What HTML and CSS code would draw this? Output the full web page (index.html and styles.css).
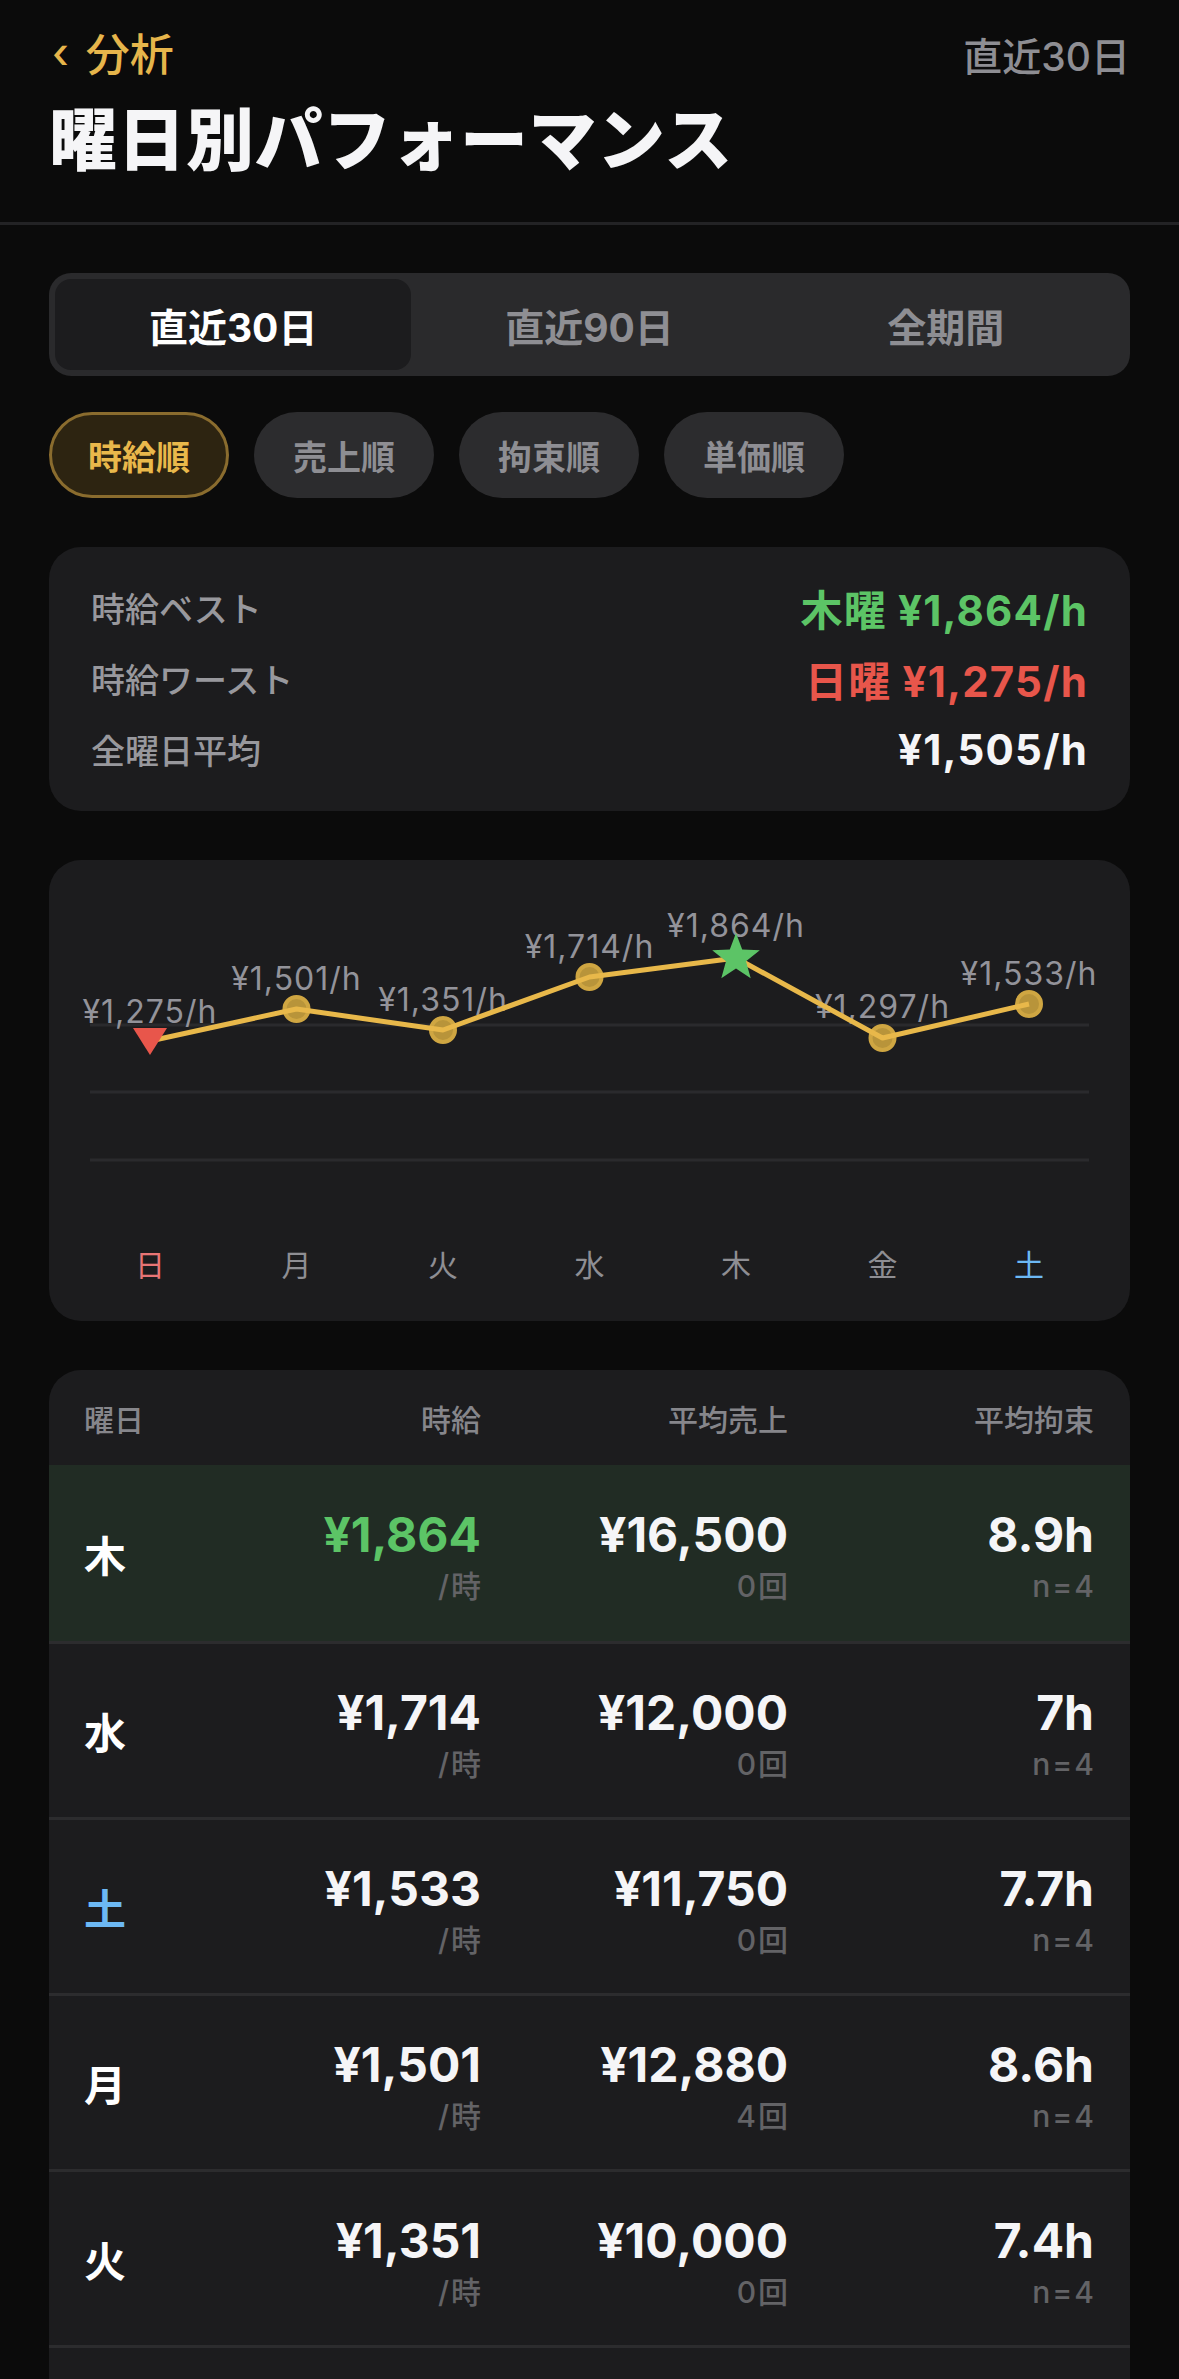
FILE: index.html
```html
<!DOCTYPE html>
<html lang="ja">
<head>
  <meta charset="UTF-8" />
  <meta name="viewport" content="width=device-width, initial-scale=1" />
  <title>曜日別パフォーマンス</title>
  <link rel="stylesheet" href="styles.css">
</head>
<body>
<div class="screen">

  <!-- Header -->
  <header class="header">
    <div class="nav">
      <a class="back" href="#"><span class="chev">‹</span>分析</a>
      <span class="range">直近30日</span>
    </div>
    <h1 class="title">曜日別パフォーマンス</h1>
  </header>

  <main class="content">

    <!-- Filters -->
    <div class="filters">
      <div class="segment">
        <button class="seg active">直近30日</button>
        <button class="seg">直近90日</button>
        <button class="seg">全期間</button>
      </div>
      <div class="chips">
        <button class="chip active">時給順</button>
        <button class="chip">売上順</button>
        <button class="chip">拘束順</button>
        <button class="chip">単価順</button>
      </div>
    </div>

    <!-- Summary -->
    <section class="card summary">
      <div class="sum-row">
        <span class="sum-label">時給ベスト</span>
        <span class="sum-value best">木曜 ¥1,864/h</span>
      </div>
      <div class="sum-row">
        <span class="sum-label">時給ワースト</span>
        <span class="sum-value worst">日曜 ¥1,275/h</span>
      </div>
      <div class="sum-row">
        <span class="sum-label">全曜日平均</span>
        <span class="sum-value">¥1,505/h</span>
      </div>
    </section>

    <!-- Chart -->
    <section class="card chart">
      <svg class="chart-svg" width="1081" height="461" viewBox="0 0 1081 461">
        <g class="grid">
          <line x1="41" y1="165" x2="1040" y2="165" />
          <line x1="41" y1="232" x2="1040" y2="232" />
          <line x1="41" y1="300" x2="1040" y2="300" />
        </g>
        <g class="labels">
          <text x="101" y="163">¥1,275/h</text>
          <text x="247.5" y="130">¥1,501/h</text>
          <text x="394" y="151">¥1,351/h</text>
          <text x="540.5" y="98">¥1,714/h</text>
          <text x="687" y="77">¥1,864/h</text>
          <text x="833.5" y="158">¥1,297/h</text>
          <text x="980" y="125">¥1,533/h</text>
        </g>
        <g class="dots">
          <circle cx="247.5" cy="149" r="12" />
          <circle cx="394" cy="170" r="12" />
          <circle cx="540.5" cy="117" r="12" />
          <circle cx="833.5" cy="178" r="12" />
          <circle cx="980" cy="144" r="12" />
        </g>
        <polyline class="line" points="101,181 247.5,149 394,170 540.5,117 687,98 833.5,178 980,144" />
        <polygon class="worst-mark" points="84,168 118,168 101,195" />
        <polygon class="best-mark" points="687,73 693.2,89.5 710.8,90.3 697,101.2 701.7,118.2 687,108.5 672.3,118.2 677,101.2 663.2,90.3 680.8,89.5" />
        <g class="days">
          <text x="101" y="416" class="sun">日</text>
          <text x="247.5" y="416">月</text>
          <text x="394" y="416">火</text>
          <text x="540.5" y="416">水</text>
          <text x="687" y="416">木</text>
          <text x="833.5" y="416">金</text>
          <text x="980" y="416" class="sat">土</text>
        </g>
      </svg>
    </section>

    <!-- Table -->
    <section class="card table">
      <div class="thead">
        <span>曜日</span>
        <span>時給</span>
        <span>平均売上</span>
        <span>平均拘束</span>
      </div>

      <div class="trow top">
        <span class="day">木</span>
        <div class="cell"><span class="val best">¥1,864</span><span class="sub">/時</span></div>
        <div class="cell"><span class="val">¥16,500</span><span class="sub">0回</span></div>
        <div class="cell"><span class="val">8.9h</span><span class="sub">n=4</span></div>
      </div>
      <div class="trow">
        <span class="day">水</span>
        <div class="cell"><span class="val">¥1,714</span><span class="sub">/時</span></div>
        <div class="cell"><span class="val">¥12,000</span><span class="sub">0回</span></div>
        <div class="cell"><span class="val">7h</span><span class="sub">n=4</span></div>
      </div>
      <div class="trow">
        <span class="day sat">土</span>
        <div class="cell"><span class="val">¥1,533</span><span class="sub">/時</span></div>
        <div class="cell"><span class="val">¥11,750</span><span class="sub">0回</span></div>
        <div class="cell"><span class="val">7.7h</span><span class="sub">n=4</span></div>
      </div>
      <div class="trow">
        <span class="day">月</span>
        <div class="cell"><span class="val">¥1,501</span><span class="sub">/時</span></div>
        <div class="cell"><span class="val">¥12,880</span><span class="sub">4回</span></div>
        <div class="cell"><span class="val">8.6h</span><span class="sub">n=4</span></div>
      </div>
      <div class="trow">
        <span class="day">火</span>
        <div class="cell"><span class="val">¥1,351</span><span class="sub">/時</span></div>
        <div class="cell"><span class="val">¥10,000</span><span class="sub">0回</span></div>
        <div class="cell"><span class="val">7.4h</span><span class="sub">n=4</span></div>
      </div>
      <div class="trow more"></div>
    </section>

  </main>
</div>
</body>
</html>
```

FILE: styles.css
```css
* {
  margin: 0; padding: 0; box-sizing: border-box;
}
html, body {
  height: 100%;
  overflow: hidden;
}
body {
  background: #0b0b0b;
  color: #f5f5f7;
  font-family: "Inter", "Noto Sans CJK JP", sans-serif;
}
button {
  font-family: inherit;
  cursor: pointer;
}

/* Header */
.header {
  padding: 21px 49px 41px;
  border-bottom: 3px solid #232325;
}
.nav {
  height: 62px;
  display: flex;
  justify-content: space-between;
  align-items: center;
}
.back {
  color: #e6b54b;
  text-decoration: none;
  font-size: 44px;
  font-weight: 500;
  display: flex;
  align-items: center;
}
.chev {
  font-size: 42px;
  margin: 0 17px 0 3px;
}
.range {
  color: #8e8e93;
  font-size: 39px;
  font-weight: 500;
  margin-top: 3px;
}
.title {
  margin-top: 16px;
  font-size: 68px;
  line-height: 82px;
  font-weight: 900;
  letter-spacing: 0.5px;
  color: #f5f5f7;
}

/* Content */
.content {
  padding: 48px 49px 0;
  display: flex;
  flex-direction: column;
  gap: 49px;
}
.filters {
  display: flex;
  flex-direction: column;
  gap: 36px;
}
.segment {
  height: 103px;
  padding: 6px;
  background: #2a2a2c;
  border-radius: 22px;
  display: grid;
  grid-template-columns: repeat(3, 1fr);
}
.seg {
  border: none;
  background: transparent;
  border-radius: 16px;
  font-size: 39px;
  font-weight: 700;
  color: #8e8e93;
}
.seg.active {
  background: #1c1c1e;
  color: #fff;
}
.chips {
  display: flex;
  gap: 25px;
}
.chip {
  height: 86px;
  padding: 0 36px;
  border: 3px solid transparent;
  border-radius: 43px;
  background: #2c2c2e;
  color: #8e8e93;
  font-size: 34px;
  font-weight: 700;
}
.chip.active {
  background: #2d2411;
  border-color: #8a6c2e;
  color: #e9b84b;
}

/* Cards */
.card {
  background: #1c1c1e;
  border-radius: 32px;
}
.summary {
  padding: 25px 42px 26px;
}
.sum-row {
  height: 71px;
  display: flex;
  justify-content: space-between;
  align-items: center;
}
.sum-label {
  font-size: 34px;
  font-weight: 500;
  color: #98989d;
}
.sum-value {
  font-size: 42px;
  font-weight: 700;
  letter-spacing: 1.2px;
}
.best { color: #5cc466; }
.worst { color: #e8564b; }

/* Chart */
.chart {
  height: 461px;
}
.chart-svg {
  display: block;
}
.grid line {
  stroke: #2a2a2d;
  stroke-width: 3;
}
.labels text {
  fill: #93939a;
  font-size: 32px;
  letter-spacing: 1px;
  text-anchor: middle;
}
.dots circle {
  fill: #b8943a;
  stroke: #cfa642;
  stroke-width: 4;
}
.line {
  fill: none;
  stroke: #e8b84a;
  stroke-width: 5;
  stroke-linejoin: round;
}
.worst-mark { fill: #e8564b; }
.best-mark { fill: #5cc466; }
.days text {
  fill: #8e8e93;
  font-size: 30px;
  text-anchor: middle;
}
.days .sun { fill: #e87575; }
.days .sat { fill: #6cb8f4; }

/* Table */
.table {
  overflow: hidden;
}
.thead, .trow {
  display: grid;
  grid-template-columns: 130px 267px 307px 306px;
  padding: 0 36px 0 35px;
  align-items: center;
}
.thead {
  height: 95px;
  font-size: 30px;
  font-weight: 500;
  color: #86868b;
}
.thead span + span, .cell {
  text-align: right;
}
.trow {
  height: 176px;
}
.trow + .trow {
  border-top: 3px solid #2c2c2e;
}
.trow.top {
  background: #212c24;
}
.day {
  font-size: 42px;
  font-weight: 700;
  color: #fff;
}
.day.sat { color: #6cb8f4; }
.cell {
  padding-top: 6px;
}
.val {
  display: block;
  font-size: 48px;
  line-height: 60px;
  font-weight: 700;
}
.sub {
  display: block;
  font-size: 30px;
  line-height: 42px;
  font-weight: 500;
  letter-spacing: 2px;
  margin-right: -2px;
  color: #636366;
}
```
